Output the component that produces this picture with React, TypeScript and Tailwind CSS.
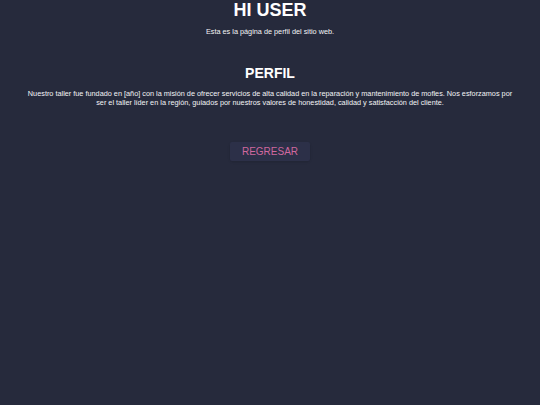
export default function App() {
  return (
    <div
      className="min-h-[405px] bg-[#262a3c] text-white text-center px-6"
      style={{ fontFamily: '"Liberation Sans", Arial, sans-serif' }}
    >
      <h1 className="text-[18px] font-bold leading-[20px]">HI USER</h1>
      <p className="text-[7.3px] mt-[7px] text-gray-100">Esta es la página de perfil del sitio web.</p>

      <h2 className="text-[14px] font-bold leading-[16px] mt-[27px]">PERFIL</h2>
      <p className="text-[7.3px] leading-[9px] mt-[8px] text-gray-100">
        Nuestro taller fue fundado en [año] con la misión de ofrecer servicios de alta calidad en la reparación y
        mantenimiento de mofles. Nos esforzamos por ser el taller líder en la región, guiados por nuestros valores de
        honestidad, calidad y satisfacción del cliente.
      </p>

      <div className="mt-[35px] flex justify-center">
        <button className="bg-[#2c3048] text-[#d0689f] text-[10px] px-[12px] h-[19px] rounded-[2px] shadow-sm">
          REGRESAR
        </button>
      </div>
    </div>
  );
}
